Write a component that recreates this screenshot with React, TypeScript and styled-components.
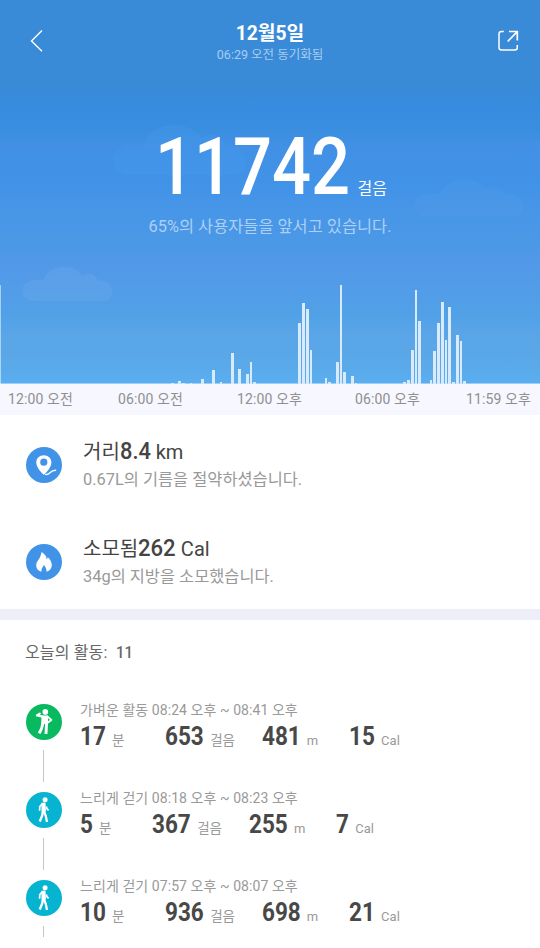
import React from "react";
import styled, { createGlobalStyle } from "styled-components";

const GlobalStyle = createGlobalStyle`
  * { box-sizing: border-box; }
  body {
    margin: 0;
    background: #fff;
    font-family: Roboto, "Noto Sans CJK KR", sans-serif;
    color: #484848;
  }
`;

const Screen = styled.main`
  width: 540px;
  height: 937px;
  overflow: hidden;
  background: #fff;
`;

const Hero = styled.section`
  position: relative;
  height: 384px;
  display: flex;
  flex-direction: column;
  color: #fff;
  background: linear-gradient(
    #398ad7 0px, #398ad7 88px, #388ce0 105px, #3a8ee0 130px, #4190e5 145px,
    #4193e8 185px, #4896e7 215px, #4b98e6 245px, #5299e8 265px, #529ce8 290px,
    #51a1e7 315px, #5aa5e7 335px, #5aa8e8 360px, #5aaef0 384px
  );
`;

const Clouds = styled.svg`
  position: absolute;
  inset: 0;
`;

const Header = styled.header`
  position: relative;
  height: 82px;
  padding: 0 20px 0 26px;
  display: flex;
  align-items: center;
  justify-content: space-between;
`;

const IconButton = styled.button`
  width: 22px;
  height: 24px;
  padding: 0;
  border: 0;
  background: none;
  color: #fff;
  display: flex;
`;

const Heading = styled.div`
  display: flex;
  flex-direction: column;
  align-items: center;
  padding-top: 4px;
  margin-left: -6px;
`;

const Title = styled.h1`
  margin: 0;
  font-size: 19.3px;
  font-weight: 700;
  line-height: 24px;
`;

const SyncText = styled.div`
  font-size: 12.5px;
  line-height: 18px;
  color: #a9cdf0;
`;

const Digits = styled.span<{ $size: number; $count: number; $scale: number; $weight?: number }>`
  display: inline-block;
  font-size: ${(p) => p.$size}px;
  font-weight: ${(p) => p.$weight ?? 700};
  transform: scaleX(${(p) => p.$scale});
  transform-origin: 0 50%;
  margin-right: ${(p) => -0.5615 * p.$count * (1 - p.$scale)}em;
`;

const StepTotal = styled.div`
  position: relative;
  height: 125px;
  padding-left: 155px;
  display: flex;
  align-items: baseline;
  line-height: 171px;
`;

const StepUnit = styled.span`
  margin-left: 7px;
  font-size: 16px;
  line-height: 24px;
`;

const Ranking = styled.p`
  position: relative;
  margin: 6px 0 0;
  text-align: center;
  font-size: 16.4px;
  line-height: 28px;
  color: #acd0f5;
`;

const Chart = styled.svg`
  position: relative;
  display: block;
  margin-top: auto;
`;

const TimeAxis = styled.div`
  height: 31px;
  padding: 0 9px 0 8px;
  display: grid;
  grid-template-columns: 110px 119px 118px 111px auto;
  background: #f7f7ff;
  color: #8f8f8f;
  font-size: 14px;
  line-height: 30px;
  letter-spacing: 0.1px;
  white-space: nowrap;
`;

const Summary = styled.section`
  height: 194px;
`;

const SummaryRow = styled.div`
  height: 97px;
  padding: 2px 0 0 26px;
  display: flex;
  align-items: center;
  gap: 21px;
`;

const SummaryText = styled.div`
  display: flex;
  flex-direction: column;
  padding-top: 1px;
`;

const SummaryValue = styled.div`
  font-size: 20px;
  line-height: 28px;
  white-space: pre;
  color: #444;
`;

const SummaryNote = styled.div`
  font-size: 16.4px;
  line-height: 28px;
  color: #999;
`;

const Badge = styled.svg`
  display: block;
  flex: none;
`;

const Divider = styled.div`
  height: 11px;
  background: #eeeef8;
`;

const SectionTitle = styled.h2`
  height: 82px;
  margin: 0;
  padding: 18px 0 0 25px;
  font-size: 16px;
  font-weight: 400;
  line-height: 30px;
  letter-spacing: 0.15px;
  white-space: pre;
  color: #666;
`;

const Activity = styled.article`
  height: 88px;
  padding-left: 26px;
  display: flex;
  gap: 18px;
`;

const Timeline = styled.div`
  width: 36px;
  padding-top: 2px;
  display: flex;
  flex-direction: column;
  align-items: center;
`;

const Connector = styled.div`
  width: 1px;
  height: 32px;
  margin: 10px 1px 0 0;
  background: #c6c6c6;
`;

const ActivityTime = styled.div`
  height: 17px;
  font-size: 14px;
  line-height: 17px;
  letter-spacing: 0.07px;
  color: #999;
`;

const Stats = styled.div`
  height: 35px;
  display: flex;
  align-items: baseline;
  line-height: 36px;
`;

const Unit = styled.span<{ $gap: number; $latin?: boolean }>`
  margin: 0 ${(p) => p.$gap}px 0 6px;
  font-size: ${(p) => (p.$latin ? 13 : 13.5)}px;
  color: #999;
`;

// x, width, top; every bar stands on the base line at 384.
const bars: [number, number, number][] = [
  [171, 3, 383], [178, 3, 381], [182, 3, 383], [190, 2, 383], [201, 3, 379],
  [212, 3, 370], [220, 2, 382], [231, 3, 353], [238, 3, 369], [246, 3, 374],
  [250, 2, 362], [253, 3, 382], [298, 3, 323], [302, 3, 303], [306, 3, 309],
  [310, 2, 350], [325, 2, 378], [328, 3, 382], [336, 3, 362], [340, 2, 285],
  [343, 3, 372], [351, 3, 376], [355, 2, 383], [403, 3, 382], [407, 3, 380],
  [411, 3, 350], [415, 2, 290], [418, 3, 321], [430, 2, 380], [433, 3, 351],
  [437, 3, 323], [441, 3, 302], [445, 2, 340], [448, 3, 307], [452, 3, 382],
  [456, 3, 335], [460, 2, 341], [463, 3, 381],
];

const CLOUD =
  "M11 34C5 34 0 29.500 0 23.500C0 17 6 13 13 13L21 13C24 5 31 0 41 0C49 0 56 3 60 9C66 4 73 7 75 13C83 13 90 17 90 24C90 30 86 34 80 34Z";

const times = ["12:00 오전", "06:00 오전", "12:00 오후", "06:00 오후", "11:59 오후"];

type Kind = "light" | "walk";

interface ActivityData {
  kind: Kind;
  label: string;
  values: [string, string, string, string];
}

const activities: ActivityData[] = [
  { kind: "light", label: "가벼운 활동 08:24 오후 ~ 08:41 오후", values: ["17", "653", "481", "15"] },
  { kind: "walk", label: "느리게 걷기 08:18 오후 ~ 08:23 오후", values: ["5", "367", "255", "7"] },
  { kind: "walk", label: "느리게 걷기 07:57 오후 ~ 08:07 오후", values: ["10", "936", "698", "21"] },
];

const units = ["분", "걸음", "m", "Cal"];
const unitGaps = [41, 27, 31, 0];

function DistanceBadge() {
  return (
    <Badge width="36" height="36" viewBox="0 0 36 36">
      <circle cx="18" cy="18" r="18" fill="#4193e8" />
      <path
        fill="#fff"
        fillRule="evenodd"
        d="M17.800 8.300C13.500 8.300 10.300 11.400 10.300 15.400C10.300 20.300 15 25 17.800 27.800C20.700 25 25.400 20.300 25.400 15.400C25.400 11.400 22 8.300 17.800 8.300ZM17.800 11.600A3.600 3.600 0 1 1 17.800 18.800A3.600 3.600 0 0 1 17.800 11.600Z"
      />
      <path d="M19.500 27.400C24.500 28.100 23.200 23.400 29.600 23.300" fill="none" stroke="#fff" strokeWidth="1.400" strokeLinecap="round" />
    </Badge>
  );
}

function FlameBadge() {
  return (
    <Badge width="36" height="36" viewBox="0 0 36 36">
      <circle cx="18" cy="18" r="18" fill="#4193e8" />
      <path
        fill="#fff"
        d="M15.300 27.700C11.900 26.700 10 24.300 10.200 20.900C10.400 18.200 11.900 17 13.300 14.600C14.300 12.900 14.900 10.700 15.600 8C18.400 9.700 20.500 12.100 20.700 15.300C21.500 14.800 21.700 14.100 21.500 12.900C24.300 15.200 25.700 18.100 25.800 21C25.900 24.400 23.900 26.700 20.600 27.700C20.600 25.500 19.800 23.300 18 21.100C16.200 23.300 15.300 25.500 15.300 27.700Z"
      />
    </Badge>
  );
}

function ActivityBadge({ kind }: { kind: Kind }) {
  if (kind === "light") {
    return (
      <Badge width="36" height="36" viewBox="0 0 36 36">
        <circle cx="18" cy="18" r="18" fill="#08b960" />
        <circle cx="19.300" cy="7.900" r="2.800" fill="#fff" />
        <path d="M15.500 11.400L22 11.400L22 20L15.200 20Z" fill="#fff" />
        <g fill="none" stroke="#fff" strokeLinejoin="round" strokeLinecap="round">
          <path d="M16.700 12.700L10.900 11.500L13.800 9.600" strokeWidth="2.200" />
          <path d="M21.400 12.400L25.400 16L21.600 18.800" strokeWidth="1.800" />
          <path d="M16.900 19L15.600 24.300L13.200 29.400M20.600 19L20.300 24.400L20 30" strokeWidth="2.900" strokeLinecap="butt" />
        </g>
      </Badge>
    );
  }
  return (
    <Badge width="36" height="36" viewBox="0 0 36 36">
      <circle cx="18" cy="18" r="18" fill="#06b4d1" />
      <circle cx="19.100" cy="7.700" r="2.500" fill="#fff" />
      <path d="M16 11.400L18.900 11.100L19.300 19.100L16.200 20Z" fill="#fff" stroke="#fff" strokeWidth="1.200" strokeLinejoin="round" />
      <g fill="none" stroke="#fff" strokeLinejoin="round">
        <path d="M16.200 11.900L13.800 14.500L13.600 18.800" strokeWidth="1.700" />
        <path d="M20.300 14.600L20.900 16.600L22.600 18.300" strokeWidth="1.700" />
        <path d="M16.900 19L16.200 23.500L13.700 29.500M18 19.300L19.800 24L21 29.900" strokeWidth="2.300" />
      </g>
    </Badge>
  );
}

export default function App() {
  return (
    <>
      <GlobalStyle />
      <Screen>
        <Hero>
          <Clouds width="540" height="384" viewBox="0 0 540 384" fill="#fff">
            <path d={CLOUD} transform="translate(113 125) scale(1.48)" fill="#469bec" fillOpacity="0.35" />
            <path d={CLOUD} transform="translate(414 180) scale(1.22 1.08)" fillOpacity="0.025" />
            <path d={CLOUD} transform="translate(22.500 267)" fillOpacity="0.055" />
          </Clouds>
          <Header>
            <IconButton aria-label="뒤로">
              <svg width="22" height="24" fill="none" stroke="currentColor" strokeWidth="1.400">
                <path d="M16 1.500L5.500 12L16 22.300" />
              </svg>
            </IconButton>
            <Heading>
              <Title>12월5일</Title>
              <SyncText>06:29 오전 동기화됨</SyncText>
            </Heading>
            <IconButton aria-label="공유">
              <svg width="22" height="24" fill="none" stroke="currentColor" strokeWidth="1.500">
                <path d="M5.800 2.600H3.500Q1 2.600 1 5V18.500Q1 21 3.500 21H16.800Q19.300 21 19.300 18.500V16" />
                <path d="M11 2.500H19.300V11.500M19 2.800L9.700 12.500" strokeWidth="1.700" />
              </svg>
            </IconButton>
          </Header>
          <StepTotal>
            <Digits $size={80} $count={5} $scale={0.858} $weight={500}>11742</Digits>
            <StepUnit>걸음</StepUnit>
          </StepTotal>
          <Ranking>65%의 사용자들을 앞서고 있습니다.</Ranking>
          <Chart width="540" height="100" viewBox="0 284 540 100" shapeRendering="crispEdges">
            <rect x="0" y="285" width="1" height="99" fill="#fff" fillOpacity="0.5" />
            <rect x="0" y="383" width="540" height="1" fill="#fff" fillOpacity="0.4" />
            {bars.map(([x, width, top]) => (
              <rect key={x} x={x} y={top} width={width} height={384 - top} fill="#d9eafc" />
            ))}
          </Chart>
        </Hero>
        <TimeAxis>
          {times.map((time) => (
            <span key={time}>{time}</span>
          ))}
        </TimeAxis>
        <Summary>
          <SummaryRow>
            <DistanceBadge />
            <SummaryText>
              <SummaryValue>
                거리<Digits $size={23.5} $count={2.5} $scale={0.93} $weight={500}>8.4</Digits> km
              </SummaryValue>
              <SummaryNote>0.67L의 기름을 절약하셨습니다.</SummaryNote>
            </SummaryText>
          </SummaryRow>
          <SummaryRow>
            <FlameBadge />
            <SummaryText>
              <SummaryValue>
                소모됨<Digits $size={23.5} $count={3} $scale={0.94} $weight={500}>262</Digits> Cal
              </SummaryValue>
              <SummaryNote>34g의 지방을 소모했습니다.</SummaryNote>
            </SummaryText>
          </SummaryRow>
        </Summary>
        <Divider />
        <SectionTitle>
          오늘의 활동:{"  "}<Digits $size={16.5} $count={2} $scale={0.9} $weight={500}>11</Digits>
        </SectionTitle>
        {activities.map((item) => (
          <Activity key={item.label}>
            <Timeline>
              <ActivityBadge kind={item.kind} />
              <Connector />
            </Timeline>
            <div>
              <ActivityTime>{item.label}</ActivityTime>
              <Stats>
                {item.values.map((value, i) => (
                  <React.Fragment key={units[i]}>
                    <Digits $size={25} $count={value.length} $scale={0.9}>{value}</Digits>
                    <Unit $gap={unitGaps[i]} $latin={i > 1}>{units[i]}</Unit>
                  </React.Fragment>
                ))}
              </Stats>
            </div>
          </Activity>
        ))}
      </Screen>
    </>
  );
}
